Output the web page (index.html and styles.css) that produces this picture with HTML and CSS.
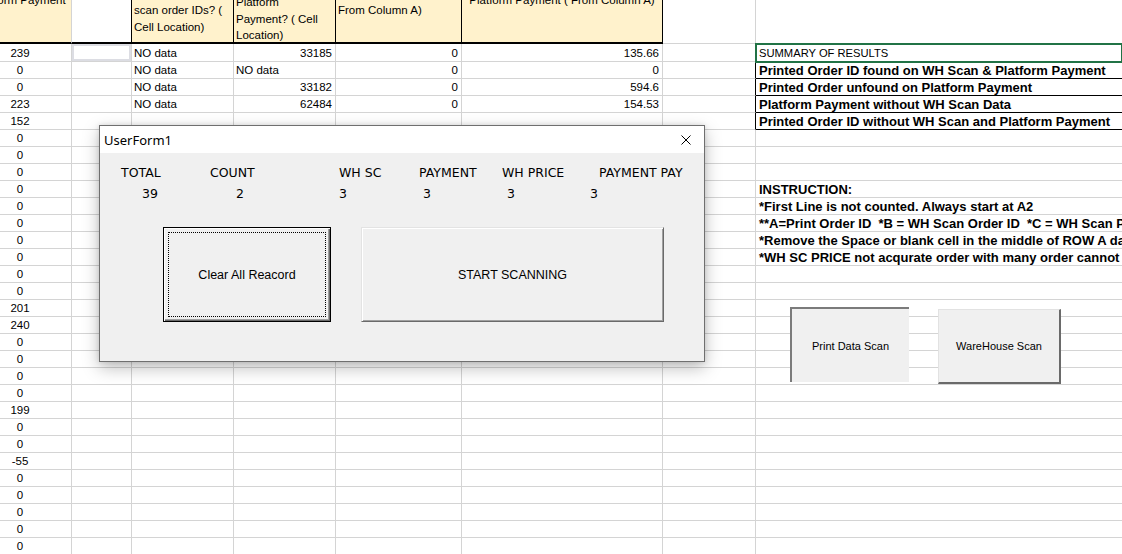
FILE: index.html
```html
<!DOCTYPE html>
<html>
<head>
<meta charset="utf-8">
<title>Sheet</title>
<link rel="stylesheet" href="styles.css">
</head>
<body>
<div class="sheet">
  <div class="row head">
    <div class="c h hc"><div class="ht up8">Platform Payment</div></div>
    <div class="c h hb"></div>
    <div class="c h"><div class="ht up0">scan order IDs? (
Cell Location)</div></div>
    <div class="c h"><div class="ht up6">Platform
Payment? ( Cell
Location)</div></div>
    <div class="c h"><div class="ht up0">From Column A)</div></div>
    <div class="c h hc"><div class="ht up8">Platform Payment ( From Column A)</div></div>
    <div class="c hg"></div>
    <div class="c hh"></div>
  </div>

  <div class="row first">
    <div class="c ctr">239</div><div class="c sel"></div><div class="c">NO data</div><div class="c n">33185</div><div class="c n">0</div><div class="c n">135.66</div><div class="c bk"></div><div class="c last active sumhead">SUMMARY OF RESULTS</div>
  </div>
  <div class="row">
    <div class="c ctr">0</div><div class="c"></div><div class="c">NO data</div><div class="c">NO data</div><div class="c n">0</div><div class="c n">0</div><div class="c bk"></div><div class="c last sum">Printed Order ID found on WH Scan &amp; Platform Payment</div>
  </div>
  <div class="row">
    <div class="c ctr">0</div><div class="c"></div><div class="c">NO data</div><div class="c n">33182</div><div class="c n">0</div><div class="c n">594.6</div><div class="c bk"></div><div class="c last sum">Printed Order unfound on Platform Payment</div>
  </div>
  <div class="row">
    <div class="c ctr">223</div><div class="c"></div><div class="c">NO data</div><div class="c n">62484</div><div class="c n">0</div><div class="c n">154.53</div><div class="c bk"></div><div class="c last sum">Platform Payment without WH Scan Data</div>
  </div>
  <div class="row">
    <div class="c ctr">152</div><div class="c"></div><div class="c"></div><div class="c"></div><div class="c"></div><div class="c"></div><div class="c bk"></div><div class="c last sum">Printed Order ID without WH Scan and Platform Payment</div>
  </div>
  <div class="row"><div class="c ctr">0</div><div class="c"></div><div class="c"></div><div class="c"></div><div class="c"></div><div class="c"></div><div class="c"></div><div class="c last"></div></div>
  <div class="row"><div class="c ctr">0</div><div class="c"></div><div class="c"></div><div class="c"></div><div class="c"></div><div class="c"></div><div class="c"></div><div class="c last"></div></div>
  <div class="row"><div class="c ctr">0</div><div class="c"></div><div class="c"></div><div class="c"></div><div class="c"></div><div class="c"></div><div class="c"></div><div class="c last"></div></div>
  <div class="row"><div class="c ctr">0</div><div class="c"></div><div class="c"></div><div class="c"></div><div class="c"></div><div class="c"></div><div class="c"></div><div class="c last ins">INSTRUCTION:</div></div>
  <div class="row"><div class="c ctr">0</div><div class="c"></div><div class="c"></div><div class="c"></div><div class="c"></div><div class="c"></div><div class="c"></div><div class="c last ins">*First Line is not counted. Always start at A2</div></div>
  <div class="row"><div class="c ctr">0</div><div class="c"></div><div class="c"></div><div class="c"></div><div class="c"></div><div class="c"></div><div class="c"></div><div class="c last ins">**A=Print Order ID  *B = WH Scan Order ID  *C = WH Scan Price  *D = Platform Payment</div></div>
  <div class="row"><div class="c ctr">0</div><div class="c"></div><div class="c"></div><div class="c"></div><div class="c"></div><div class="c"></div><div class="c"></div><div class="c last ins">*Remove the Space or blank cell in the middle of ROW A data</div></div>
  <div class="row"><div class="c ctr">0</div><div class="c"></div><div class="c"></div><div class="c"></div><div class="c"></div><div class="c"></div><div class="c"></div><div class="c last ins">*WH SC PRICE not acqurate order with many order cannot be counted</div></div>
  <div class="row"><div class="c ctr">0</div><div class="c"></div><div class="c"></div><div class="c"></div><div class="c"></div><div class="c"></div><div class="c"></div><div class="c last"></div></div>
  <div class="row"><div class="c ctr">0</div><div class="c"></div><div class="c"></div><div class="c"></div><div class="c"></div><div class="c"></div><div class="c"></div><div class="c last"></div></div>
  <div class="row"><div class="c ctr">201</div><div class="c"></div><div class="c"></div><div class="c"></div><div class="c"></div><div class="c"></div><div class="c"></div><div class="c last"></div></div>
  <div class="row"><div class="c ctr">240</div><div class="c"></div><div class="c"></div><div class="c"></div><div class="c"></div><div class="c"></div><div class="c"></div><div class="c last"></div></div>
  <div class="row"><div class="c ctr">0</div><div class="c"></div><div class="c"></div><div class="c"></div><div class="c"></div><div class="c"></div><div class="c"></div><div class="c last"></div></div>
  <div class="row"><div class="c ctr">0</div><div class="c"></div><div class="c"></div><div class="c"></div><div class="c"></div><div class="c"></div><div class="c"></div><div class="c last"></div></div>
  <div class="row"><div class="c ctr">0</div><div class="c"></div><div class="c"></div><div class="c"></div><div class="c"></div><div class="c"></div><div class="c"></div><div class="c last"></div></div>
  <div class="row"><div class="c ctr">0</div><div class="c"></div><div class="c"></div><div class="c"></div><div class="c"></div><div class="c"></div><div class="c"></div><div class="c last"></div></div>
  <div class="row"><div class="c ctr">199</div><div class="c"></div><div class="c"></div><div class="c"></div><div class="c"></div><div class="c"></div><div class="c"></div><div class="c last"></div></div>
  <div class="row"><div class="c ctr">0</div><div class="c"></div><div class="c"></div><div class="c"></div><div class="c"></div><div class="c"></div><div class="c"></div><div class="c last"></div></div>
  <div class="row"><div class="c ctr">0</div><div class="c"></div><div class="c"></div><div class="c"></div><div class="c"></div><div class="c"></div><div class="c"></div><div class="c last"></div></div>
  <div class="row"><div class="c ctr">-55</div><div class="c"></div><div class="c"></div><div class="c"></div><div class="c"></div><div class="c"></div><div class="c"></div><div class="c last"></div></div>
  <div class="row"><div class="c ctr">0</div><div class="c"></div><div class="c"></div><div class="c"></div><div class="c"></div><div class="c"></div><div class="c"></div><div class="c last"></div></div>
  <div class="row"><div class="c ctr">0</div><div class="c"></div><div class="c"></div><div class="c"></div><div class="c"></div><div class="c"></div><div class="c"></div><div class="c last"></div></div>
  <div class="row"><div class="c ctr">0</div><div class="c"></div><div class="c"></div><div class="c"></div><div class="c"></div><div class="c"></div><div class="c"></div><div class="c last"></div></div>
  <div class="row"><div class="c ctr">0</div><div class="c"></div><div class="c"></div><div class="c"></div><div class="c"></div><div class="c"></div><div class="c"></div><div class="c last"></div></div>
  <div class="row"><div class="c ctr">0</div><div class="c"></div><div class="c"></div><div class="c"></div><div class="c"></div><div class="c"></div><div class="c"></div><div class="c last"></div></div>
</div>

<div class="shape shape-print">Print Data Scan</div>
<div class="shape shape-wh">WareHouse Scan</div>

<div class="userform">
  <div class="titlebar">
    <span class="title">UserForm1</span>
    <svg class="close" width="10" height="10" viewBox="0 0 10 10"><path d="M0.5 0.5L9.5 9.5M9.5 0.5L0.5 9.5" stroke="#000" stroke-width="1" fill="none"/></svg>
  </div>
  <div class="formbody">
    <div class="labels">
      <span>TOTAL</span><span>COUNT</span><span>WH SC</span><span>PAYMENT</span><span>WH PRICE</span><span>PAYMENT PAY</span>
    </div>
    <div class="values">
      <span>39</span><span>2</span><span>3</span><span>3</span><span>3</span><span>3</span>
    </div>
    <div class="buttons">
      <button class="btn clear">Clear All Reacord</button>
      <button class="btn start">START SCANNING</button>
    </div>
  </div>
</div>
</body>
</html>
```

FILE: styles.css
```css
html, body {
  margin: 0;
  padding: 0;
}
body {
  width: 1122px;
  height: 554px;
  overflow: hidden;
  background: #ffffff;
  font-family: "Liberation Sans", Arial, sans-serif;
  color: #000;
  position: relative;
}

.sheet {
  margin-left: -31px;
  width: 1153px;
}
.row {
  display: grid;
  grid-template-columns: 103px 60px 102px 102px 126px 201px 93px 366px;
  height: 17.02px;
}
.row.first {
  height: 18px;
}
.row.head {
  height: 44px;
}

.c {
  box-sizing: border-box;
  border-right: 1px solid #d4d4d4;
  border-bottom: 1px solid #d4d4d4;
  font-size: 11.5px;
  display: flex;
  align-items: center;
  padding: 0 3px 0 2px;
  white-space: pre;
  min-width: 0;
}
.c.last {
  border-right: none;
  padding-left: 3px;
}
.c.n {
  justify-content: flex-end;
}
.c.ctr {
  justify-content: center;
  padding: 0;
}
.c.bk {
  border-right-color: #000;
}
.c.sel {
  box-shadow: inset 0 0 0 2px #dcdde3;
}

/* header */
.c.h {
  background: #fff2cc;
  border-bottom: 2px solid #000;
  border-right: 1px solid #000;
  align-items: flex-start;
  overflow: hidden;
  line-height: 16.5px;
}
.c.h.hb {
  background: #ffffff;
}
.c.h:first-child {
  border-right-color: #d4d4d4;
}
.c.h.hc {
  justify-content: center;
  padding: 0;
}
.c.hg {
  border-right-color: #d4d4d4;
}
.c.hh {
  border-right: none;
  border-bottom: none;
}
.ht.up0 { margin-top: 2px; }
.ht.up6 { margin-top: -6px; }
.ht.up8 { margin-top: -8px; }

/* summary */
.active {
  outline: 2px solid #217346;
  outline-offset: -1px;
  position: relative;
  z-index: 1;
}
.sumhead {
  font-size: 11.2px;
}
.sum {
  font-weight: bold;
  font-size: 13px;
  border-bottom-color: #000;
}
.ins {
  font-weight: bold;
  font-size: 13px;
}

/* excel shapes */
.shape {
  position: absolute;
  box-sizing: border-box;
  background: #f0f0f0;
  display: flex;
  align-items: center;
  justify-content: center;
  font-family: "Liberation Sans", Arial, sans-serif;
  font-size: 11px;
  color: #000;
}
.shape-print {
  left: 790px;
  top: 307px;
  width: 119px;
  height: 75px;
  border-left: 2px solid #7b7b7b;
  border-top: 2px solid #7b7b7b;
}
.shape-wh {
  left: 938px;
  top: 309px;
  width: 123px;
  height: 75px;
  border-left: 1px solid #e2e2e2;
  border-top: 1px solid #e2e2e2;
  border-right: 2px solid #6a6a6a;
  border-bottom: 2px solid #6a6a6a;
}

/* user form */
.userform {
  position: absolute;
  left: 99px;
  top: 125px;
  width: 606px;
  height: 237px;
  box-sizing: border-box;
  border: 1px solid #6f6f6f;
  background: #f0f0f0;
  box-shadow: 0 6px 16px rgba(0, 0, 0, 0.26), 0 0 5px rgba(0, 0, 0, 0.12);
  display: flex;
  flex-direction: column;
  z-index: 5;
}
.titlebar {
  height: 27px;
  background: #ffffff;
  display: flex;
  align-items: center;
  justify-content: space-between;
  padding: 0 13px 0 4px;
  font-family: "Noto Sans", "Open Sans", sans-serif;
  font-size: 13px;
  color: #000;
}
.close {
  display: block;
  margin-top: 1px;
}
.formbody {
  padding-top: 12px;
  font-family: "DejaVu Sans", Verdana, sans-serif;
  font-size: 12.5px;
  line-height: 16px;
}
.labels {
  display: grid;
  grid-template-columns: 89px 129px 80px 83px 97px auto;
  padding-left: 21px;
}
.values {
  display: grid;
  grid-template-columns: 94px 103px 84px 84px 83px auto;
  padding-left: 42px;
  margin-top: 5px;
}
.buttons {
  display: flex;
  gap: 30px;
  padding-left: 63px;
  margin-top: 25px;
}
.btn {
  height: 95px;
  box-sizing: border-box;
  background: #f0f0f0;
  font-family: "Liberation Sans", Arial, sans-serif;
  font-size: 12.5px;
  color: #000;
  padding: 0;
  margin: 0;
  -webkit-appearance: none;
  appearance: none;
}
.btn.clear {
  width: 168px;
  border: 1px solid #000;
  box-shadow: inset 1px 1px 0 #ffffff, inset -1px -1px 0 #6a6a6a, inset -2px -2px 0 #a0a0a0;
  outline: 1px dotted #000;
  outline-offset: -6px;
}
.btn.start {
  width: 303px;
  border: 1px solid;
  border-color: #e3e3e3 #6a6a6a #6a6a6a #e3e3e3;
  box-shadow: inset 1px 1px 0 #ffffff, inset -1px -1px 0 #a0a0a0;
}
```
